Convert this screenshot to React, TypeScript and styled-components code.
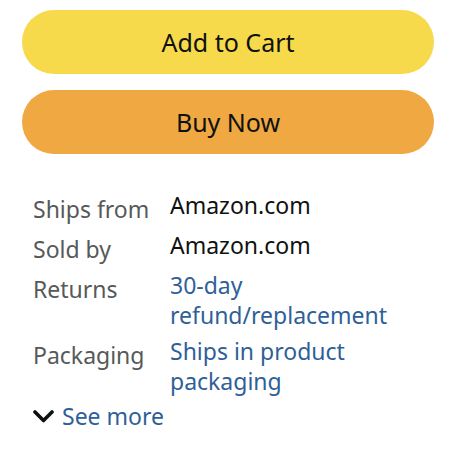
import React from "react";
import styled, { createGlobalStyle } from "styled-components";

const Global = createGlobalStyle`
  html, body { margin: 0; padding: 0; background: #ffffff; }
  body { font-family: "Noto Sans", "Open Sans", sans-serif; }
`;

const Page = styled.div`
  width: 412px;
  padding: 10px 0 0 22px;
  display: flex;
  flex-direction: column;
`;

const Buttons = styled.div`
  display: flex;
  flex-direction: column;
  gap: 16px;
`;

const PillButton = styled.button<{ $bg: string }>`
  height: 64px;
  width: 100%;
  border: none;
  border-radius: 32px;
  background: ${(p) => p.$bg};
  color: #0f1111;
  font-family: "Noto Sans", sans-serif;
  font-size: 25px;
  display: flex;
  align-items: center;
  justify-content: center;
  padding: 0;
`;

const Details = styled.div`
  margin-top: 36px;
  padding-left: 11px;
  display: flex;
  flex-direction: column;
  gap: 6px;
`;

const Row = styled.div`
  display: grid;
  grid-template-columns: 137px 1fr;
  font-size: 23px;
  line-height: 30px;
`;

const Label = styled.div`
  color: #565959;
  padding-top: 4px;
`;

const Value = styled.div<{ $link?: boolean }>`
  color: ${(p) => (p.$link ? "#2f5f98" : "#0f1111")};
  max-width: 232px;
`;

const SeeMore = styled.div`
  margin-top: -1px;
  display: flex;
  align-items: center;
  gap: 8px;
  font-size: 23px;
  line-height: 30px;
  color: #2f5f98;
`;

const Chevron = () => (
  <svg width="21" height="14" viewBox="0 0 21 14" style={{ marginTop: 2 }}>
    <path d="M2 2 L10.5 10.5 L19 2" fill="none" stroke="#0f1111" strokeWidth="3.6" strokeLinecap="round" strokeLinejoin="round" />
  </svg>
);

const rows: { label: string; value: string; link?: boolean }[] = [
  { label: "Ships from", value: "Amazon.com" },
  { label: "Sold by", value: "Amazon.com" },
  { label: "Returns", value: "30-day refund/replacement", link: true },
  { label: "Packaging", value: "Ships in product packaging", link: true },
];

export default function App() {
  return (
    <>
      <Global />
      <Page>
        <Buttons>
          <PillButton $bg="#f7d94c">Add to Cart</PillButton>
          <PillButton $bg="#f0a843">Buy Now</PillButton>
        </Buttons>
        <Details>
          {rows.map((r) => (
            <Row key={r.label}>
              <Label>{r.label}</Label>
              <Value $link={r.link}>{r.value}</Value>
            </Row>
          ))}
          <SeeMore>
            <Chevron />
            See more
          </SeeMore>
        </Details>
      </Page>
    </>
  );
}
